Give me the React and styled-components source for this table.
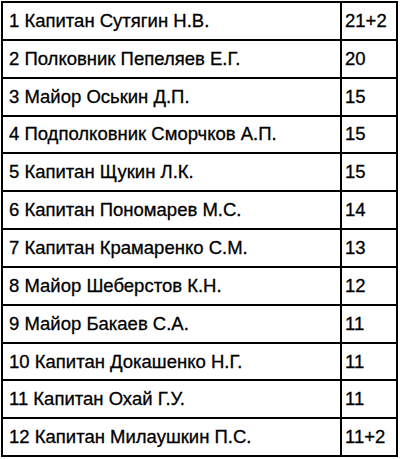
import React from "react";
import styled, { createGlobalStyle } from "styled-components";

const Global = createGlobalStyle`
  html, body { margin: 0; padding: 0; background: #fff; }
  body { font-family: "Liberation Sans", Arial, sans-serif; }
`;

const Table = styled.div`
  margin: 1px 0 0 1px;
  width: 397px;
  display: grid;
  grid-template-columns: 339px 1fr;
  grid-auto-rows: 37.85px;
  border-top: 2px solid #000;
  border-left: 2px solid #000;
  box-sizing: border-box;
`;

const Cell = styled.div`
  display: flex;
  align-items: center;
  padding-left: ${(p) => (p.$num ? "3px" : "6px")};
  border-right: 2px solid #000;
  border-bottom: 2px solid #000;
  font-size: 18.5px;
  color: #000;
  -webkit-text-stroke: 0.3px #000;
  white-space: nowrap;
  overflow: hidden;
`;

const rows = [
  ["1 Капитан Сутягин Н.В.", "21+2"],
  ["2 Полковник Пепеляев Е.Г.", "20"],
  ["3 Майор Оськин Д.П.", "15"],
  ["4 Подполковник Сморчков А.П.", "15"],
  ["5 Капитан Щукин Л.К.", "15"],
  ["6 Капитан Пономарев М.С.", "14"],
  ["7 Капитан Крамаренко С.М.", "13"],
  ["8 Майор Шеберстов К.Н.", "12"],
  ["9 Майор Бакаев С.А.", "11"],
  ["10 Капитан Докашенко Н.Г.", "11"],
  ["11 Капитан Охай Г.У.", "11"],
  ["12 Капитан Милаушкин П.С.", "11+2"],
];

export default function App() {
  return (
    <>
      <Global />
      <Table>
        {rows.map(([name, score]) => (
          <React.Fragment key={name}>
            <Cell>{name}</Cell>
            <Cell $num>{score}</Cell>
          </React.Fragment>
        ))}
      </Table>
    </>
  );
}
